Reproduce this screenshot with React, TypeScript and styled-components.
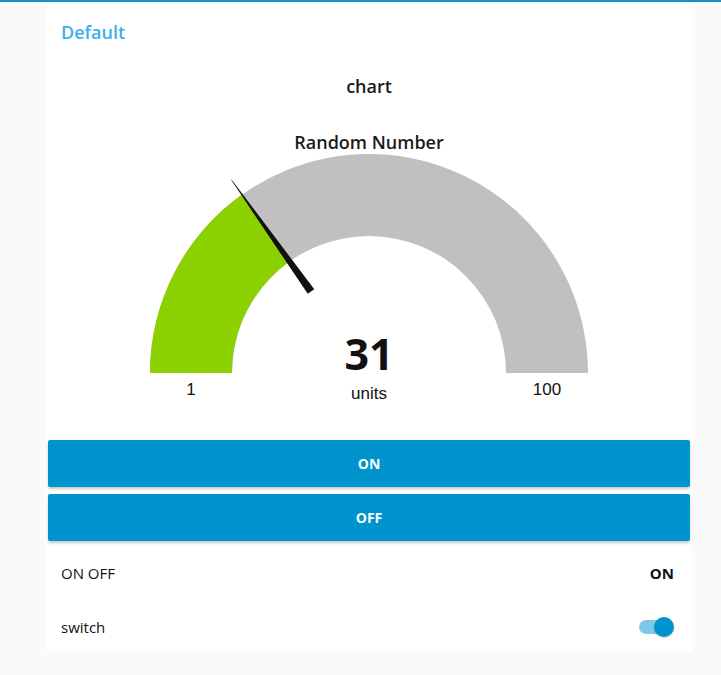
import React from "react";
import styled, { createGlobalStyle } from "styled-components";

const GlobalStyle = createGlobalStyle`
  html, body {
    margin: 0;
    padding: 0;
    background: #fafafa;
    font-family: "Open Sans", "Noto Sans", sans-serif;
    color: #111;
  }
  * { box-sizing: border-box; }
`;

const TopBar = styled.div`
  height: 2px;
  background: #1f8cc6;
`;

const Page = styled.div`
  padding: 4px 0 0 46px;
`;

const Card = styled.div`
  width: 646px;
  padding-bottom: 1px;
  background: #ffffff;
  display: flex;
  flex-direction: column;
`;

const GroupTitle = styled.div`
  height: 52px;
  line-height: 52px;
  padding-left: 15px;
  font-size: 18px;
  font-weight: 600;
  color: #3cb0ea;
`;

const GaugeSection = styled.div`
  display: flex;
  flex-direction: column;
  align-items: center;
`;

const WidgetLabel = styled.div<{ $top: number }>`
  margin-top: ${(p) => p.$top}px;
  line-height: 24px;
  font-size: 18px;
  font-weight: 600;
  color: #1a1a1a;
`;

const GaugeSvg = styled.svg`
  display: block;
`;

const Buttons = styled.div`
  margin-top: 30px;
  padding: 0 2px;
  display: flex;
  flex-direction: column;
  gap: 7px;
`;

const ActionButton = styled.button`
  height: 47px;
  border: none;
  border-radius: 2px;
  background: #0094ce;
  color: #ffffff;
  font-family: "Open Sans", sans-serif;
  font-size: 14px;
  font-weight: 700;
  box-shadow: 0 2px 3px rgba(0, 0, 0, 0.22);
  cursor: pointer;
`;

const Rows = styled.div`
  margin-top: 9px;
  display: flex;
  flex-direction: column;
  gap: 8px;
`;

const Row = styled.div`
  height: 46px;
  padding: 0 18px 0 15px;
  display: flex;
  align-items: center;
  justify-content: space-between;
  font-size: 15px;
  color: #111;
`;

const Value = styled.span`
  font-weight: 700;
`;

const Toggle = styled.div`
  position: relative;
  width: 35px;
  height: 20px;
`;

const Track = styled.div`
  position: absolute;
  left: 0;
  top: 3px;
  width: 29px;
  height: 14px;
  border-radius: 7px;
  background: #80c9e6;
`;

const Knob = styled.div`
  position: absolute;
  right: 0;
  top: 0;
  width: 20px;
  height: 20px;
  border-radius: 50%;
  background: #0094ce;
  box-shadow: 0 1px 2px rgba(0, 0, 0, 0.2);
`;

function Gauge({ value, min, max }: { value: number; min: number; max: number }) {
  const W = 460;
  const cx = W / 2;
  const cy = 219;
  const R = 219;
  const r = 137;
  const frac = (value - min) / (max - min);
  const th = frac * Math.PI;
  const c = Math.cos(th);
  const s = Math.sin(th);
  const ox = cx - R * c;
  const oy = cy - R * s;
  const ix = cx - r * c;
  const iy = cy - r * s;
  const bg = `M ${cx - R} ${cy} A ${R} ${R} 0 0 1 ${cx + R} ${cy} L ${cx + r} ${cy} A ${r} ${r} 0 0 0 ${cx - r} ${cy} Z`;
  const fg = `M ${cx - R} ${cy} A ${R} ${R} 0 0 1 ${ox} ${oy} L ${ix} ${iy} A ${r} ${r} 0 0 0 ${cx - r} ${cy} Z`;
  const ux = -c, uy = -s;
  const px = s, py = -c;
  const tipR = 237, baseR = 100, hw = 4, tw = 0.3;
  const tx = cx + ux * tipR, ty = cy + uy * tipR;
  const bx = cx + ux * baseR, by = cy + uy * baseR;
  const needle = [
    [tx + px * tw, ty + py * tw],
    [bx + px * hw, by + py * hw],
    [bx - px * hw, by - py * hw],
    [tx - px * tw, ty - py * tw],
  ]
    .map((p) => p.map((v) => v.toFixed(2)).join(","))
    .join(" ");
  return (
    <GaugeSvg width={W} height={256} viewBox={`0 0 ${W} 256`}>
      <path d={bg} fill="#c0c0c0" />
      <path d={fg} fill="#8bd100" />
      <polygon points={needle} fill="#111" />
      <text x={cx} y={216} textAnchor="middle" fontFamily="'Open Sans', sans-serif" fontWeight={700} fontSize={43} fill="#111">
        {value}
      </text>
      <text x={cx} y={245} textAnchor="middle" fontFamily="'Liberation Sans', Arial, sans-serif" fontSize={17} fill="#111">
        units
      </text>
      <text x={cx - (R + r) / 2} y={241} textAnchor="middle" fontFamily="'Liberation Sans', Arial, sans-serif" fontSize={17} fill="#111">
        {min}
      </text>
      <text x={cx + (R + r) / 2} y={241} textAnchor="middle" fontFamily="'Liberation Sans', Arial, sans-serif" fontSize={17} fill="#111">
        {max}
      </text>
    </GaugeSvg>
  );
}

export default function App() {
  return (
    <>
      <GlobalStyle />
      <TopBar />
      <Page>
        <Card>
          <GroupTitle>Default</GroupTitle>
          <GaugeSection>
            <WidgetLabel $top={16}>chart</WidgetLabel>
            <WidgetLabel $top={32}>Random Number</WidgetLabel>
            <Gauge value={31} min={1} max={100} />
          </GaugeSection>
          <Buttons>
            <ActionButton>ON</ActionButton>
            <ActionButton>OFF</ActionButton>
          </Buttons>
          <Rows>
            <Row>
              <span>ON OFF</span>
              <Value>ON</Value>
            </Row>
            <Row>
              <span>switch</span>
              <Toggle>
                <Track />
                <Knob />
              </Toggle>
            </Row>
          </Rows>
        </Card>
      </Page>
    </>
  );
}
